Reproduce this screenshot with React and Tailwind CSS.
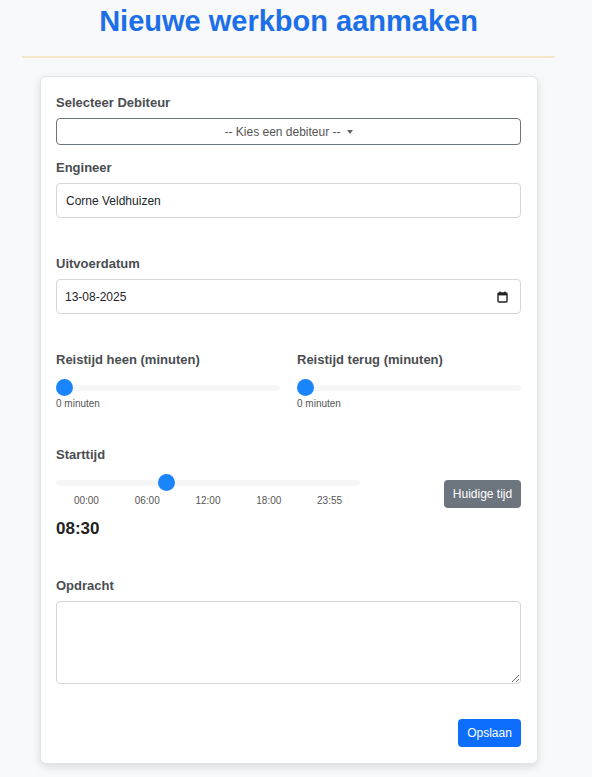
import React, { useState } from "react";

const font = { fontFamily: '"Liberation Sans", Arial, sans-serif' };

const sliderClass =
  "block w-full h-[17px] appearance-none bg-transparent cursor-pointer " +
  "[&::-webkit-slider-runnable-track]:h-[6px] [&::-webkit-slider-runnable-track]:rounded-full [&::-webkit-slider-runnable-track]:bg-[#f6f6f6] " +
  "[&::-webkit-slider-thumb]:appearance-none [&::-webkit-slider-thumb]:w-[17px] [&::-webkit-slider-thumb]:h-[17px] [&::-webkit-slider-thumb]:rounded-full [&::-webkit-slider-thumb]:bg-[#1a85fb] [&::-webkit-slider-thumb]:mt-[-5.5px] [&::-webkit-slider-thumb]:border-0";

const Label = ({ children }) => (
  <label className="block text-[13px] leading-[22px] font-bold text-[#4a4d50]">
    {children}
  </label>
);

const CalendarIcon = () => (
  <svg width="11" height="12" viewBox="0 0 11 12" fill="none">
    <rect x="1" y="2" width="9" height="9" rx="1" stroke="#222" strokeWidth="1.4" />
    <rect x="1" y="2" width="9" height="2.4" fill="#222" />
    <line x1="3" y1="0.5" x2="3" y2="2.5" stroke="#222" strokeWidth="1.3" />
    <line x1="8" y1="0.5" x2="8" y2="2.5" stroke="#222" strokeWidth="1.3" />
  </svg>
);

const App = () => {
  const [heen, setHeen] = useState(0);
  const [terug, setTerug] = useState(0);
  const [start, setStart] = useState(510);
  const [opdracht, setOpdracht] = useState("");

  const fmt = (m) =>
    String(Math.floor(m / 60)).padStart(2, "0") + ":" + String(m % 60).padStart(2, "0");

  return (
    <div className="min-h-screen bg-[#f8f9fa]" style={font}>
      <div className="w-[577px] px-[22px] pt-[4px] pb-[13px]">
        <h1 className="text-center text-[29px] leading-[35px] font-bold text-[#1c6fe8]">
          Nieuwe werkbon aanmaken
        </h1>
        <div className="mt-[17px] h-[2px] bg-[#f8e6c8]" />

        <div className="mt-[18px] ml-[18px] mr-[17px] bg-white border border-[#e2e4e6] rounded-[6px] shadow-[0_3px_8px_rgba(0,0,0,0.12)] pl-[15px] pr-[16px] pt-[15px] pb-[16px]">
          <Label>Selecteer Debiteur</Label>
          <button
            type="button"
            className="mt-[4px] w-full h-[27px] flex items-center justify-center gap-[6px] border border-[#6c757d] rounded-[4px] text-[12px] text-[#555]"
          >
            <span>-- Kies een debiteur --</span>
            <span className="inline-block w-0 h-0 border-l-[3.5px] border-r-[3.5px] border-t-[4px] border-l-transparent border-r-transparent border-t-[#666]" />
          </button>

          <div className="mt-[12px]">
            <Label>Engineer</Label>
          </div>
          <input
            type="text"
            defaultValue="Corne Veldhuizen"
            className="mt-[4px] w-full h-[35px] px-[9px] border border-[#d4d7da] rounded-[4px] text-[12px] text-[#212529] outline-none"
          />

          <div className="mt-[35px]">
            <Label>Uitvoerdatum</Label>
          </div>
          <div className="mt-[4px] w-full h-[35px] pl-[8px] pr-[12px] flex items-center justify-between border border-[#d4d7da] rounded-[4px] text-[12px] text-[#212529]">
            <span>13-08-2025</span>
            <CalendarIcon />
          </div>

          <div className="mt-[35px] grid grid-cols-2 gap-[17px]">
            <div>
              <Label>Reistijd heen (minuten)</Label>
              <div className="mt-[8px]">
                <input
                  type="range"
                  min="0"
                  max="120"
                  step="5"
                  value={heen}
                  onChange={(e) => setHeen(Number(e.target.value))}
                  className={sliderClass}
                />
              </div>
              <div className="mt-[1px] text-[10px] leading-[13px] text-[#555]">{heen} minuten</div>
            </div>
            <div>
              <Label>Reistijd terug (minuten)</Label>
              <div className="mt-[8px]">
                <input
                  type="range"
                  min="0"
                  max="120"
                  step="5"
                  value={terug}
                  onChange={(e) => setTerug(Number(e.target.value))}
                  className={sliderClass}
                />
              </div>
              <div className="mt-[1px] text-[10px] leading-[13px] text-[#555]">{terug} minuten</div>
            </div>
          </div>

          <div className="mt-[34px]">
            <Label>Starttijd</Label>
          </div>
          <div className="mt-[8px] flex items-start justify-between">
            <div className="w-[304px]">
              <input
                type="range"
                min="0"
                max="1435"
                step="5"
                value={start}
                onChange={(e) => setStart(Number(e.target.value))}
                className={sliderClass}
              />
              <div className="mt-[4px] flex text-[10px] leading-[12px] text-[#555]">
                {["00:00", "06:00", "12:00", "18:00", "23:55"].map((t) => (
                  <span key={t} className="flex-1 text-center">
                    {t}
                  </span>
                ))}
              </div>
            </div>
            <button
              type="button"
              onClick={() => {
                const d = new Date();
                setStart(Math.round((d.getHours() * 60 + d.getMinutes()) / 5) * 5);
              }}
              className="mt-[6px] h-[28px] w-[77px] rounded-[4px] bg-[#6c757d] text-white text-[12px]"
            >
              Huidige tijd
            </button>
          </div>
          <div className="mt-[11px] text-[17px] leading-[20px] font-bold text-[#222]">
            {fmt(start)}
          </div>

          <div className="mt-[36px]">
            <Label>Opdracht</Label>
          </div>
          <textarea
            value={opdracht}
            onChange={(e) => setOpdracht(e.target.value)}
            className="mt-[4px] block w-full h-[83px] px-[9px] py-[6px] border border-[#d4d7da] rounded-[4px] text-[12px] outline-none"
          />

          <div className="mt-[35px] flex justify-end">
            <button
              type="submit"
              className="h-[28px] w-[63px] rounded-[4px] bg-[#0d6efd] text-white text-[12px]"
            >
              Opslaan
            </button>
          </div>
        </div>
      </div>
    </div>
  );
};

export default App;
